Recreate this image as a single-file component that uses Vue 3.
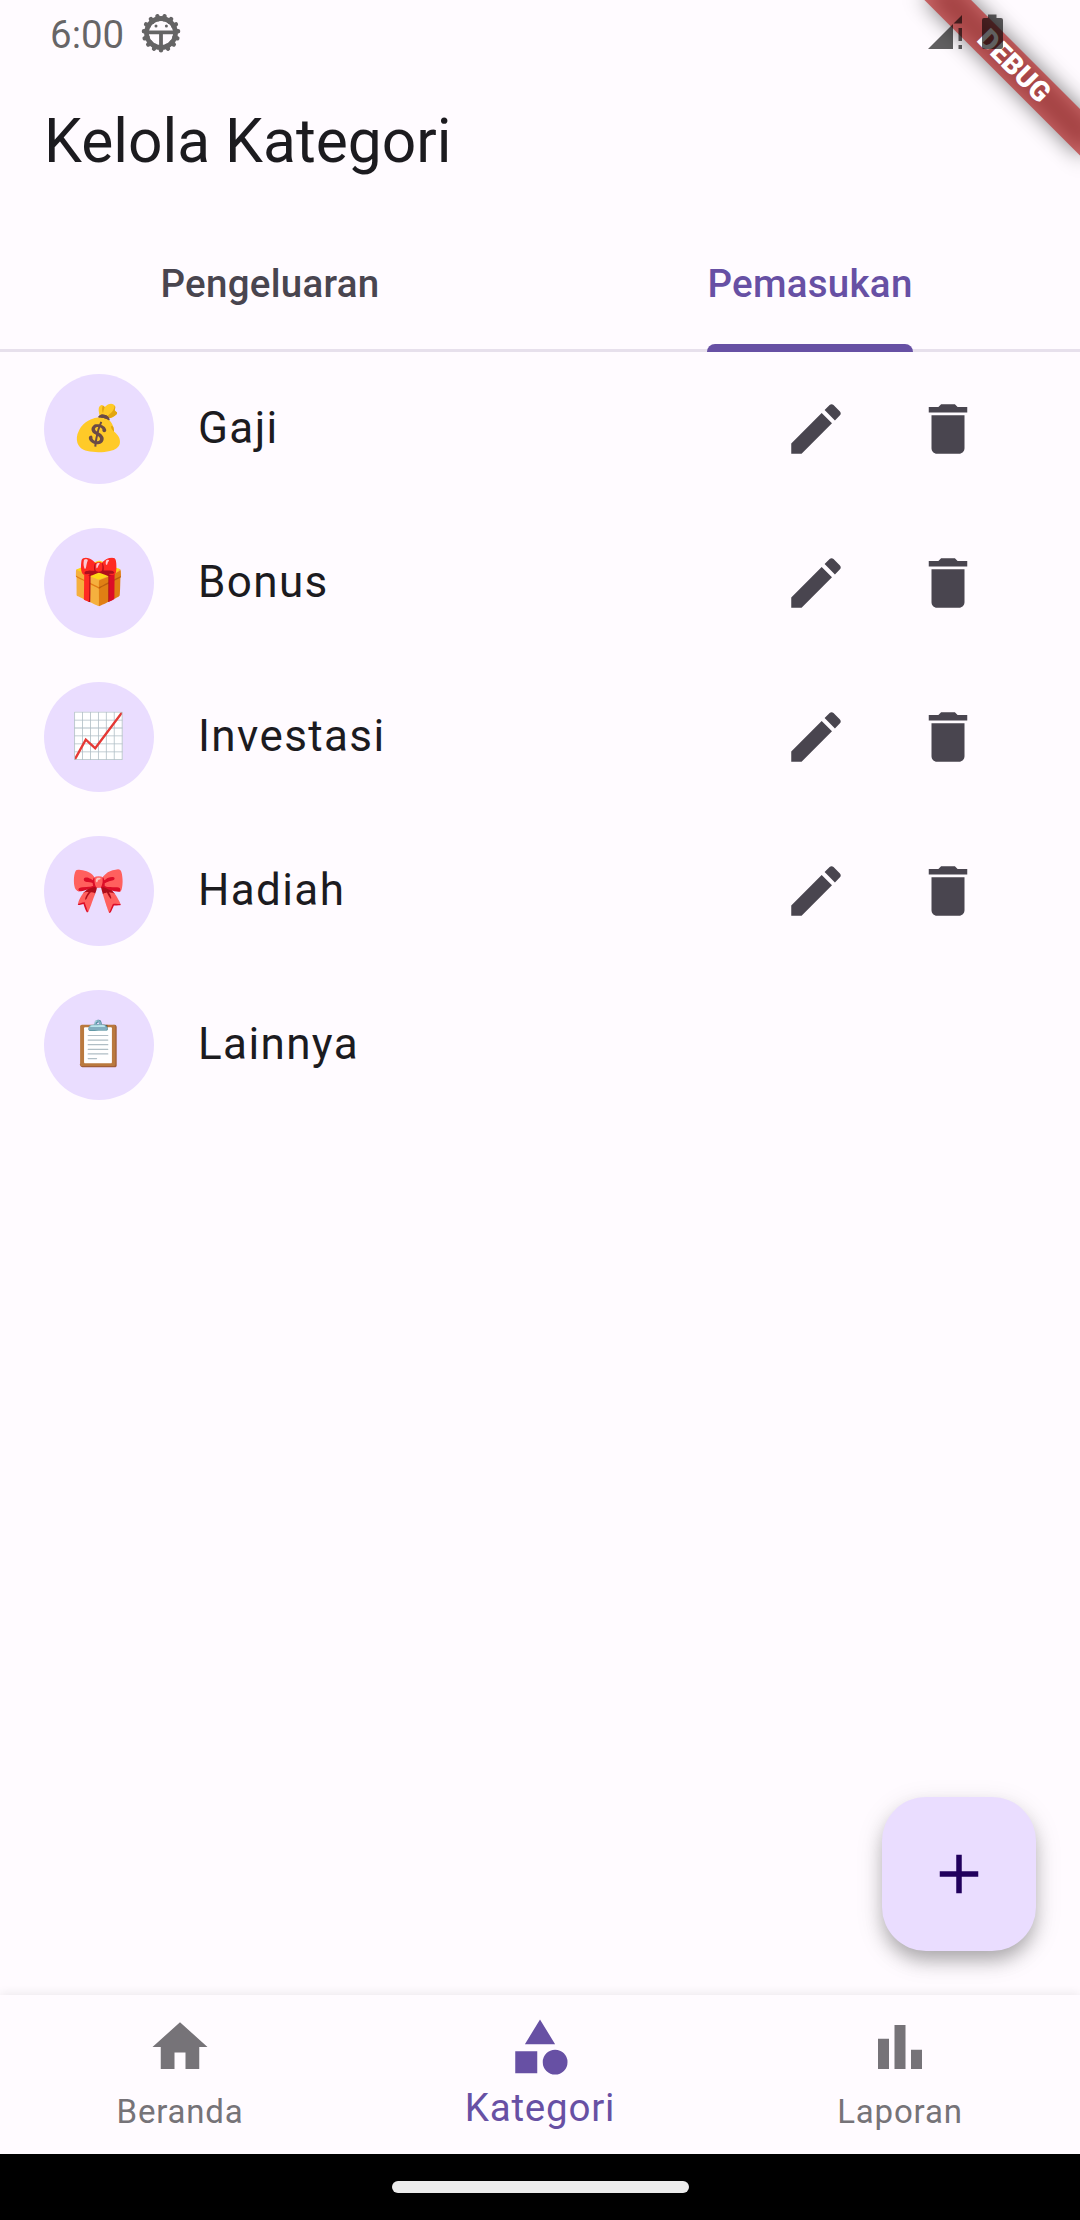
<script setup>
import { ref } from 'vue'

const tabs = ['Pengeluaran', 'Pemasukan']
const activeTab = ref('Pemasukan')

const categories = ref([
  { name: 'Gaji', emoji: '💰', editable: true },
  { name: 'Bonus', emoji: '🎁', editable: true },
  { name: 'Investasi', emoji: '📈', editable: true },
  { name: 'Hadiah', emoji: '🎀', editable: true },
  { name: 'Lainnya', emoji: '📋', editable: false },
])

const navItems = [
  { label: 'Beranda', icon: 'M10 20v-6h4v6h5v-8h3L12 3 2 12h3v8z' },
  {
    label: 'Kategori',
    icon: 'M12 2l-5.5 9h11z M22 17.5a4.5 4.5 0 1 1-9 0a4.5 4.5 0 1 1 9 0z M3 13.5h8v8H3z',
  },
  { label: 'Laporan', icon: 'M4 9h4v11H4z M16 13h4v7h-4z M10 4h4v16h-4z' },
]
const activeNav = ref('Kategori')

const teeth = Array.from({ length: 15 }, (_, i) => 24 * i)
</script>

<template>
  <div class="screen">
    <svg class="banner" width="220" height="220" viewBox="0 0 220 220">
      <defs>
        <filter id="soft" x="-50%" y="-200%" width="200%" height="500%">
          <feGaussianBlur stdDeviation="10.5" />
        </filter>
      </defs>
      <g transform="translate(220 0) rotate(45)">
        <rect x="-110" y="77" width="220" height="33" fill="#000" fill-opacity="0.5" filter="url(#soft)" />
        <rect x="-110" y="77" width="220" height="33" fill="#b71c1c" fill-opacity="0.627" />
        <text class="banner-text" x="0" y="102.5" text-anchor="middle">DEBUG</text>
      </g>
    </svg>

    <header class="status">
      <span class="clock">6:00</span>
      <svg class="gear" width="40" height="40" viewBox="-20 -20 40 40">
        <g opacity="0.6">
          <circle r="14.5" fill="none" stroke="#000" stroke-width="4.8" />
          <line
            v-for="a in teeth" :key="a"
            x1="0" y1="14" x2="0" y2="17.2"
            stroke="#000" stroke-width="4.4" stroke-linecap="round"
            :transform="`rotate(${a})`"
          />
          <path d="M-13 -2.6H13V1.2H1.9V13H-1.9V1.200H-13z" />
          <circle cx="-5" cy="-7" r="1.5" />
          <circle cx="5.4" cy="-7" r="1.5" />
        </g>
      </svg>
      <svg class="system" width="80" height="40" viewBox="0 0 80 40">
        <g opacity="0.62">
          <path d="M0 36L25 11V36z M25.5 10.5L34 2V10.5z M30.5 15H34V28H30.5z M30.5 32H34V36H30.5z" />
          <path d="M60 1.5H68.500V5H73Q75 5 75 7V34Q75 36 73 36H56Q54 36 54 34V7Q54 5 56 5H60z" />
        </g>
      </svg>
    </header>

    <h1 class="title">Kelola Kategori</h1>

    <nav class="tabs">
      <button
        v-for="tab in tabs" :key="tab"
        class="tab" :class="{ active: tab === activeTab }"
        @click="activeTab = tab"
      >
        <span class="tab-label">{{ tab }}</span>
      </button>
    </nav>

    <main class="list">
      <div v-for="item in categories" :key="item.name" class="row">
        <div class="avatar"><span class="emoji">{{ item.emoji }}</span></div>
        <span class="name">{{ item.name }}</span>
        <template v-if="item.editable">
          <button class="action" aria-label="Edit">
            <svg viewBox="0 0 24 24"><path d="M3 17.25V21h3.750L17.810 9.940l-3.750-3.750L3 17.250zM20.710 7.040c.39-.39.39-1.020 0-1.410l-2.340-2.340c-.39-.39-1.020-.39-1.410 0l-1.830 1.830 3.750 3.750 1.830-1.830z" /></svg>
          </button>
          <button class="action" aria-label="Hapus">
            <svg viewBox="0 0 24 24"><path d="M6 19c0 1.100.9 2 2 2h8c1.100 0 2-.9 2-2V7H6v12zM19 4h-3.500l-1-1h-5l-1 1H5v2h14V4z" /></svg>
          </button>
        </template>
      </div>
      <button class="fab" aria-label="Tambah">
        <svg viewBox="0 0 24 24"><path d="M19 13h-6v6h-2v-6H5v-2h6V5h2v6h6v2z" /></svg>
      </button>
    </main>

    <nav class="bottom">
      <button
        v-for="item in navItems" :key="item.label"
        class="nav-item" :class="{ active: item.label === activeNav }"
        @click="activeNav = item.label"
      >
        <svg viewBox="0 0 24 24"><path :d="item.icon" /></svg>
        <span class="nav-label">{{ item.label }}</span>
      </button>
    </nav>

    <footer class="gesture"><div class="pill"></div></footer>
  </div>
</template>

<style>
body {
  margin: 0;
  background: #fffbff;
}
</style>

<style scoped>
.screen {
  position: relative;
  display: flex;
  flex-direction: column;
  width: 1080px;
  height: 2220px;
  overflow: hidden;
  background: #fffbff;
  color: #1c1b1f;
  font-family: Roboto, sans-serif;
}
button {
  margin: 0;
  padding: 0;
  border: 0;
  background: none;
  font: inherit;
  color: inherit;
}
svg {
  display: block;
}
.banner {
  position: absolute;
  top: 0;
  right: 0;
}
.banner-text {
  font-size: 28.05px;
  font-weight: 900;
  fill: #fff;
}
.status {
  position: relative;
  display: flex;
  align-items: center;
  box-sizing: border-box;
  height: 66px;
  padding: 0 72px 0 50px;
}
.clock {
  font-size: 38.5px;
  line-height: 66px;
  padding-top: 3px;
  color: rgba(0, 0, 0, 0.6);
}
.gear {
  margin-left: 17px;
}
.system {
  margin-left: auto;
}
.title {
  margin: 0;
  padding-left: 44px;
  height: 154px;
  line-height: 152px;
  font-size: 60.5px;
  font-weight: 400;
}
.tabs {
  display: flex;
  height: 132px;
  box-sizing: border-box;
  border-bottom: 3px solid #e7e0ec;
}
.tab {
  flex: 1;
  display: flex;
  justify-content: center;
  height: 132px;
  color: #49454f;
}
.tab-label {
  position: relative;
  height: 132px;
  line-height: 127px;
  font-size: 38.5px;
  font-weight: 500;
  letter-spacing: 0.275px;
}
.tab.active {
  color: #6750a4;
}
.tab.active .tab-label::after {
  content: '';
  position: absolute;
  left: 0;
  right: 0;
  bottom: 0;
  height: 8.25px;
  border-radius: 8.25px 8.25px 0 0;
  background: #6750a4;
}
.list {
  position: relative;
  flex: 1;
}
.row {
  display: flex;
  align-items: center;
  height: 154px;
  padding: 0 66px 0 44px;
}
.avatar {
  display: flex;
  align-items: center;
  justify-content: center;
  width: 110px;
  height: 110px;
  border-radius: 50%;
  background: #eaddff;
}
.emoji {
  padding-bottom: 2px;
  font-family: 'Noto Color Emoji', Roboto, sans-serif;
  font-size: 44px;
  line-height: 1;
}
.name {
  flex: 1;
  margin-left: 44px;
  padding-bottom: 2px;
  font-size: 44px;
  letter-spacing: 1.375px;
}
.action {
  display: flex;
  align-items: center;
  justify-content: center;
  width: 132px;
  height: 132px;
}
.action svg {
  width: 66px;
  height: 66px;
  fill: #49454f;
}
.fab {
  position: absolute;
  right: 44px;
  bottom: 44px;
  display: flex;
  align-items: center;
  justify-content: center;
  width: 154px;
  height: 154px;
  border-radius: 44px;
  background: #eaddff;
  box-shadow: 0 11px 18px -2px rgba(0, 0, 0, 0.25), 0 8px 28px rgba(0, 0, 0, 0.13);
}
.fab svg {
  width: 66px;
  height: 66px;
  fill: #21005d;
}
.bottom {
  position: relative;
  display: flex;
  height: 159.5px;
  background: #fffbff;
  box-shadow: 0 -2px 9px rgba(0, 0, 0, 0.07);
}
.nav-item {
  flex: 1;
  display: flex;
  flex-direction: column;
  align-items: center;
  padding-top: 19.5px;
  color: #767378;
}
.nav-item svg {
  width: 66px;
  height: 66px;
  fill: currentColor;
}
.nav-label {
  margin-top: 10px;
  height: 44px;
  line-height: 44px;
  font-size: 33px;
  letter-spacing: 0.8px;
}
.nav-item.active {
  color: #6750a4;
}
.nav-item.active .nav-label {
  margin-top: 6px;
  font-size: 38.5px;
}
.gesture {
  position: relative;
  display: flex;
  align-items: center;
  justify-content: center;
  height: 66px;
  background: #000;
}
.pill {
  width: 297px;
  height: 12px;
  border-radius: 6px;
  background: #ececec;
}
</style>
